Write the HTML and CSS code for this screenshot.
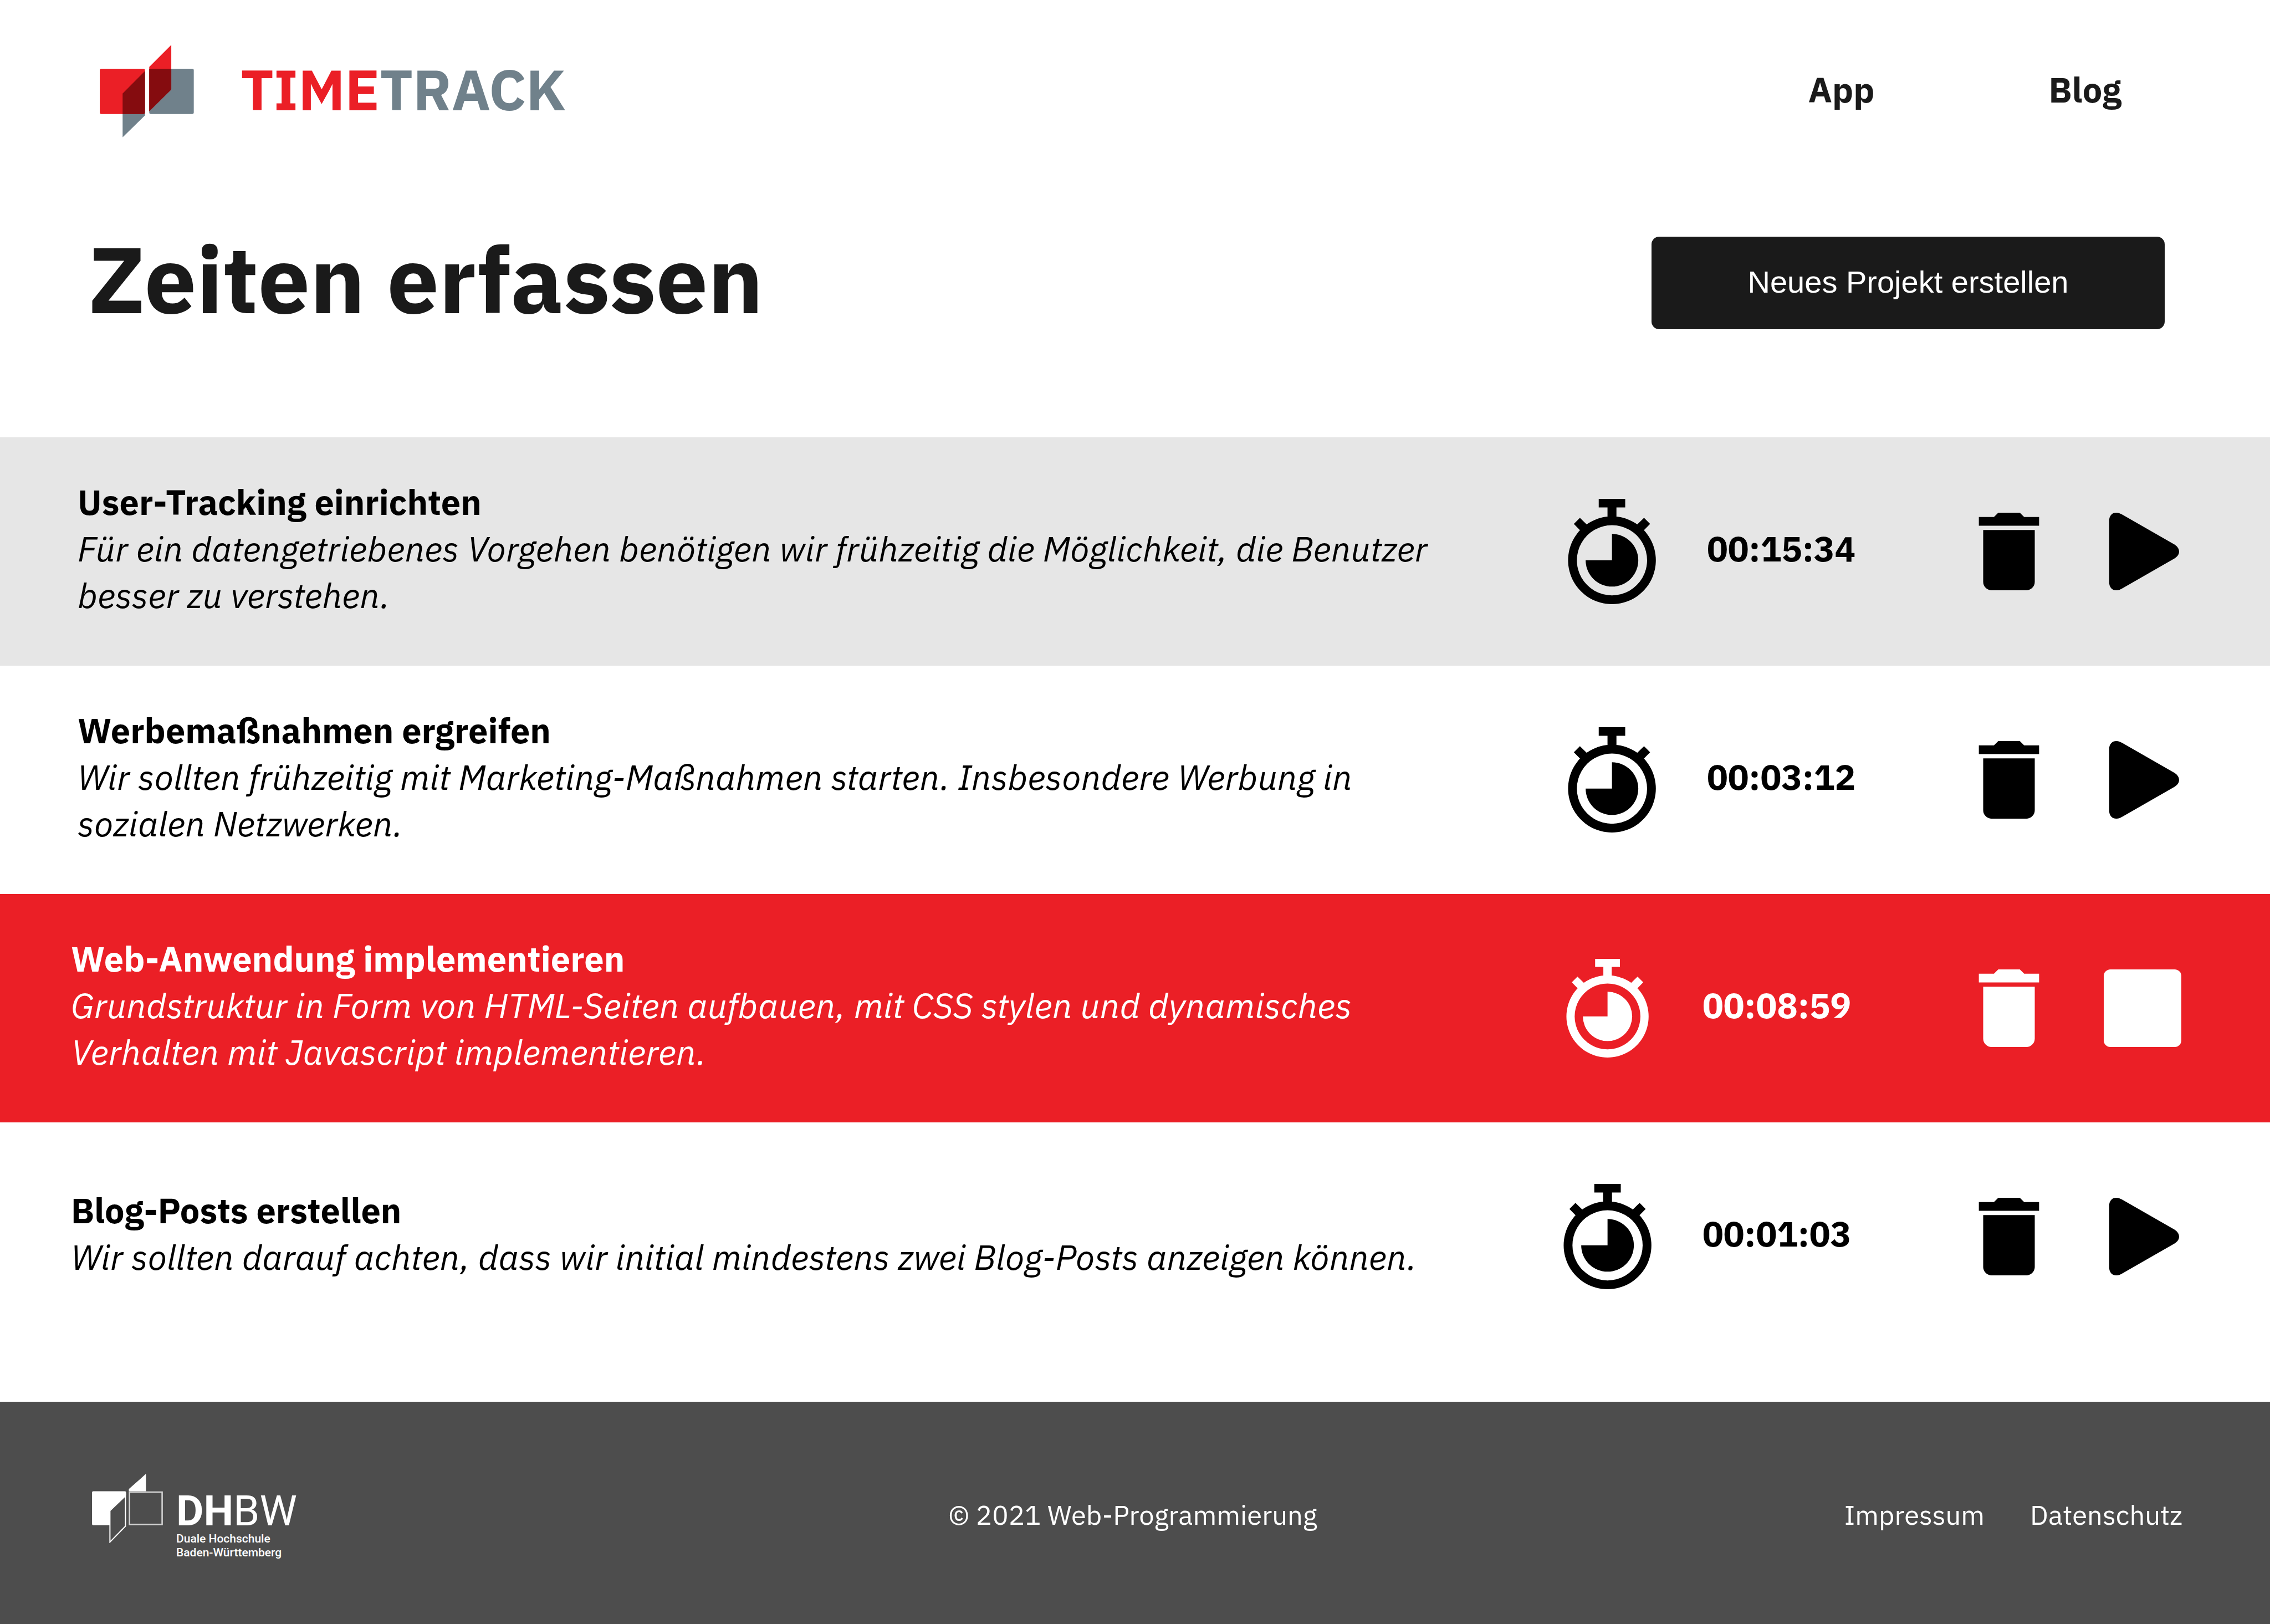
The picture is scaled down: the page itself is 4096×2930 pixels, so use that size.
FILE: index.html
```html
<!DOCTYPE html>
<html lang="de">
<head>
  <meta charset="utf-8">
  <meta name="viewport" content="width=device-width, initial-scale=1">
  <title>Timetrack – Zeiten erfassen</title>
  <link rel="stylesheet" href="styles.css">
</head>
<body>
  <svg class="sprite" aria-hidden="true">
    <symbol id="stopwatch" viewBox="79 57 551 660">
      <path d="M272 57H438V111H383V175H327V111H272Z"/>
      <path d="M154 176L212 232L174 273L116 214ZM556 176L498 232L536 273L594 214Z"/>
      <path fill-rule="evenodd" d="M355 167A275 275 0 1 1 354.900 167ZM355 222A220 220 0 1 0 355.100 222Z"/>
      <path d="M355 442V277A165 165 0 1 1 190 442Z"/>
    </symbol>
    <symbol id="trash" viewBox="15 84 483 483">
      <path d="M190 84H324L351 111H444V165H69V111H163ZM96 192H417V514A53 53 0 0 1 364 567H149A53 53 0 0 1 96 514Z"/>
    </symbol>
    <symbol id="play" viewBox="849 84 483 483">
      <path d="M883 133C883 103 901 84 927 84C942 84 955 90 968 98L1284 279C1305 291 1318 306 1318 326C1318 345 1305 360 1284 372L968 553C955 561 942 567 927 567C901 567 883 548 883 518Z"/>
    </symbol>
    <symbol id="stop" viewBox="0 0 140 140">
      <rect width="140" height="140" rx="12"/>
    </symbol>
  </svg>

  <header class="header">
    <a class="brand" href="#">
      <svg class="brand-mark" viewBox="55 38 590 580" aria-hidden="true">
        <path fill="#70818b" d="M198 345L338 204V480L198 617Z"/>
        <rect fill="#eb1f26" x="55" y="187" width="283" height="284" rx="10"/>
        <rect fill="#70818b" x="365" y="187" width="279" height="284" rx="10"/>
        <path fill="#eb1f26" d="M365 176L503 38V318L365 454Z"/>
        <path fill="#850c0f" d="M198 343L338 202V461Q338 471 328 471H198ZM365 187H503V318L365 454Z"/>
      </svg>
      <span class="brand-name"><span class="brand-time">TIME</span>TRACK</span>
    </a>
    <nav class="nav">
      <a href="#">App</a>
      <a href="#">Blog</a>
    </nav>
  </header>

  <main>
    <div class="intro">
      <h1>Zeiten erfassen</h1>
      <button class="create" type="button">Neues Projekt erstellen</button>
    </div>

    <ul class="tasks">
      <li class="task task-shaded">
        <div class="task-text">
          <h2>User-Tracking einrichten</h2>
          <p>Für ein datengetriebenes Vorgehen benötigen wir frühzeitig die Möglichkeit, die Benutzer besser zu verstehen.</p>
        </div>
        <div class="timer">
          <svg class="watch" aria-hidden="true"><use href="#stopwatch"/></svg>
          <time>00:15:34</time>
        </div>
        <div class="actions">
          <button type="button" aria-label="Löschen"><svg><use href="#trash"/></svg></button>
          <button type="button" aria-label="Starten"><svg><use href="#play"/></svg></button>
        </div>
      </li>
      <li class="task">
        <div class="task-text">
          <h2>Werbemaßnahmen ergreifen</h2>
          <p>Wir sollten frühzeitig mit Marketing-Maßnahmen starten. Insbesondere Werbung in sozialen Netzwerken.</p>
        </div>
        <div class="timer">
          <svg class="watch" aria-hidden="true"><use href="#stopwatch"/></svg>
          <time>00:03:12</time>
        </div>
        <div class="actions">
          <button type="button" aria-label="Löschen"><svg><use href="#trash"/></svg></button>
          <button type="button" aria-label="Starten"><svg><use href="#play"/></svg></button>
        </div>
      </li>
      <li class="task task-wide task-active">
        <div class="task-text">
          <h2>Web-Anwendung implementieren</h2>
          <p>Grundstruktur in Form von HTML-Seiten aufbauen, mit CSS stylen und dynamisches Verhalten mit Javascript implementieren.</p>
        </div>
        <div class="timer">
          <svg class="watch" aria-hidden="true"><use href="#stopwatch"/></svg>
          <time>00:08:59</time>
        </div>
        <div class="actions">
          <button type="button" aria-label="Löschen"><svg><use href="#trash"/></svg></button>
          <button type="button" aria-label="Stoppen"><svg><use href="#stop"/></svg></button>
        </div>
      </li>
      <li class="task task-wide">
        <div class="task-text">
          <h2>Blog-Posts erstellen</h2>
          <p>Wir sollten darauf achten, dass wir initial mindestens zwei Blog-Posts anzeigen können.</p>
        </div>
        <div class="timer">
          <svg class="watch" aria-hidden="true"><use href="#stopwatch"/></svg>
          <time>00:01:03</time>
        </div>
        <div class="actions">
          <button type="button" aria-label="Löschen"><svg><use href="#trash"/></svg></button>
          <button type="button" aria-label="Starten"><svg><use href="#play"/></svg></button>
        </div>
      </li>
    </ul>
  </main>

  <footer class="footer">
    <a class="school" href="#">
      <svg class="school-mark" viewBox="95 95 443 432" aria-hidden="true">
        <path fill="#fff" d="M103 204H300Q308 204 308 212V228L206 322V416H103Q95 416 95 408V212Q95 204 103 204ZM325 204V190L432 95V204Z"/>
        <path fill="none" stroke="#fff" stroke-width="7" d="M207 325L304 232V422L207 521Z"/>
        <path fill="none" stroke="#fff" stroke-width="9" stroke-opacity=".75" d="M329 209H533V411H329Z"/>
      </svg>
      <span class="school-text">
        <span class="school-name"><b>DH</b>BW</span>
        <span class="school-line">Duale Hochschule</span>
        <span class="school-line">Baden-Württemberg</span>
      </span>
    </a>
    <p class="copyright">© 2021 Web-Programmierung</p>
    <nav class="legal">
      <a href="#">Impressum</a>
      <a href="#">Datenschutz</a>
    </nav>
  </footer>
</body>
</html>
```
FILE: styles.css
```css
* {
  box-sizing: border-box;
  margin: 0;
  padding: 0;
}

body {
  display: flex;
  flex-direction: column;
  min-height: 100vh;
  background: #fff;
  color: #000;
  font-family: "IBM Plex Sans", Roboto, sans-serif;
  font-size: 63px;
  line-height: 84px;
}

a {
  color: inherit;
  text-decoration: none;
}

button {
  border: 0;
  background: none;
  color: inherit;
}

.sprite {
  position: absolute;
  width: 0;
  height: 0;
}

/* Header */

.header {
  display: flex;
  align-items: center;
  justify-content: space-between;
  height: 328px;
  padding: 0 268px 0 180px;
  color: #1a1a1a;
  font-weight: 700;
}

.brand {
  display: flex;
  align-items: center;
  gap: 84px;
  color: #70818b;
  font-size: 103px;
}

.brand-mark {
  width: 170px;
  height: 167px;
}

.brand-name {
  padding-bottom: 8px;
}

.brand-time {
  color: #eb1f26;
}

.nav {
  display: flex;
  gap: 314px;
  padding-bottom: 6px;
}

.intro {
  display: flex;
  align-items: center;
  justify-content: space-between;
  padding: 99px 190px 195px 160px;
}

h1 {
  padding-bottom: 16px;
  color: #1a1a1a;
  font-size: 167px;
  line-height: 140px;
}

.create {
  width: 926px;
  height: 167px;
  padding-bottom: 4px;
  border-radius: 14px;
  background: #1a1a1a;
  color: #fff;
  font-family: "Liberation Sans", Arial, sans-serif;
  font-size: 56px;
}

/* Task list */

.tasks {
  padding-bottom: 92px;
  list-style: none;
}

.task {
  display: flex;
  align-items: center;
  min-height: 412px;
  padding: 0 160px 0 140px;
}

.task-wide {
  padding-left: 128px;
}

.task-shaded {
  background: #e6e6e6;
}

.task-active {
  background: #eb1f26;
  color: #fff;
}

.task-text {
  flex: 1;
  padding: 0 200px 12px 0;
}

.task h2 {
  font-size: 63px;
}

.task p {
  font-style: italic;
}

.timer {
  display: flex;
  align-items: center;
  gap: 92px;
  width: 726px;
  font-weight: 700;
}

.task-wide .timer {
  width: 734px;
}

.timer time {
  padding-bottom: 12px;
}

.watch {
  width: 159px;
  height: 190px;
  fill: currentColor;
}

.task-active .watch {
  height: 178px;
}

.actions {
  display: flex;
  gap: 101px;
}

.actions svg {
  display: block;
  width: 140px;
  height: 140px;
  fill: currentColor;
}

/* Footer */

.footer {
  display: grid;
  flex: 1;
  grid-template-columns: 1fr auto 1fr;
  align-items: center;
  padding: 6px 158px 0 150px;
  background: #4d4d4d;
  color: #fff;
  font-size: 49px;
}

.school {
  display: flex;
  gap: 24px;
  padding: 8px 0 0 16px;
  font-family: Roboto, sans-serif;
}

.school-mark {
  width: 128px;
  height: 125px;
}

.school-text {
  display: flex;
  flex-direction: column;
  padding-top: 29px;
}

.school-name {
  font-size: 76px;
  line-height: 76px;
}

.school-line {
  font-size: 21px;
  font-weight: 500;
  line-height: 25px;
}

.legal {
  display: flex;
  justify-content: flex-end;
  gap: 82px;
}
```
